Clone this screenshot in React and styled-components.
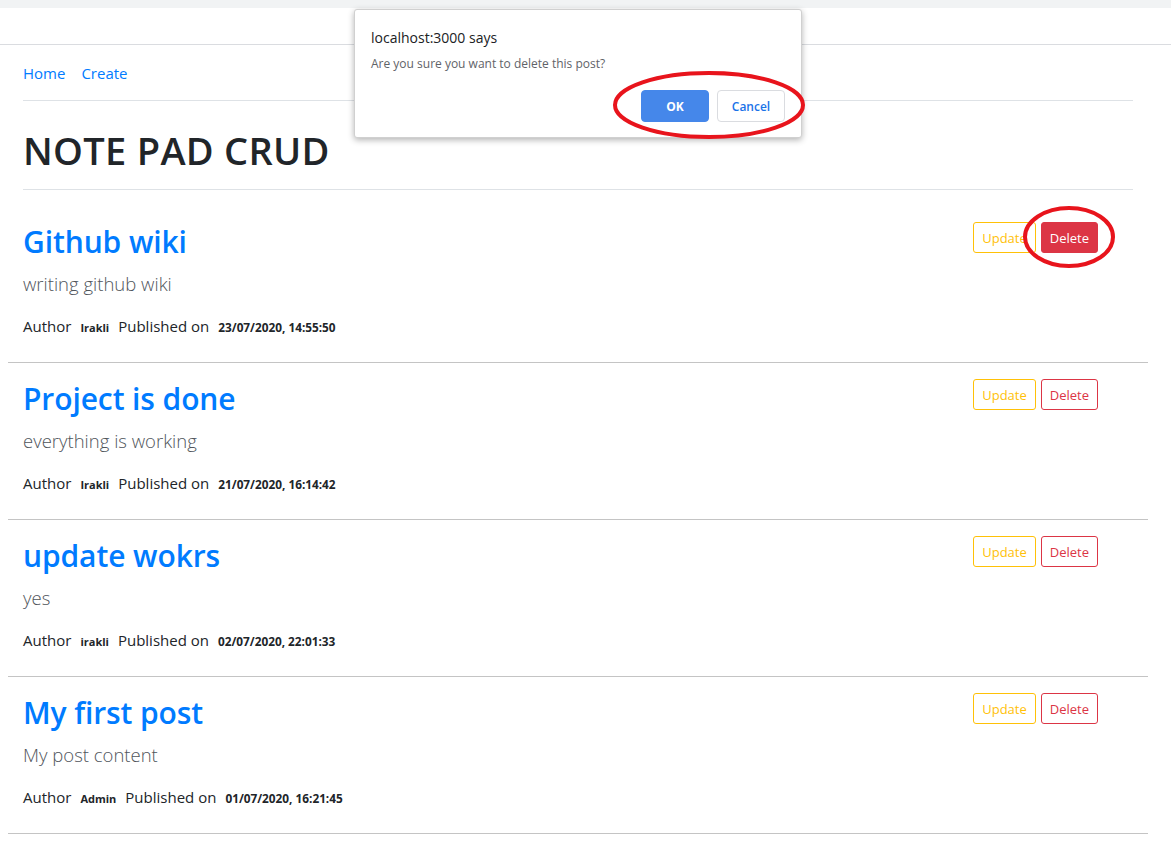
import React from 'react';
import styled, { createGlobalStyle } from 'styled-components';

const GlobalStyles = createGlobalStyle`
  body {
    margin: 0;
    font-family: 'Open Sans', 'Noto Sans', sans-serif;
    color: #212529;
    background: #fff;
  }
`;

const Page = styled.div`
  position: relative;
  min-height: 850px;
`;

const TopStrip = styled.div`
  height: 8px;
  background-color: #f1f3f4;
`;

const Header = styled.div`
  height: 36px;
  border-bottom: 1px solid #dadce0;
`;

const Main = styled.main`
  padding: 0 23px 0 8px;
`;

const Container = styled.div`
  padding: 0 15px;
`;

const Nav = styled.nav`
  display: flex;
  gap: 16px;
  padding: 16px 0 15px;
`;

const NavLink = styled.a`
  color: #007bff;
  font-size: 15px;
  line-height: 24px;
  text-decoration: none;
`;

const Rule = styled.hr`
  margin: 0;
  border: none;
  border-top: 1px solid #dee2e6;
`;

const Title = styled.h1`
  margin: 25px 0 15px;
  font-size: 38px;
  font-weight: 600;
  line-height: 48px;
  letter-spacing: 0.3px;
`;

const PostList = styled.div`
  margin-top: 16px;
`;

const Post = styled.article`
  display: flex;
  justify-content: space-between;
  align-items: flex-start;
  padding: 17px 50px 22px 15px;
  border-bottom: 1px solid #c4c4c4;
`;

const PostBody = styled.div`
  display: flex;
  flex-direction: column;
`;

const PostTitle = styled.a`
  color: #007bff;
  font-size: 30px;
  font-weight: 600;
  line-height: 38px;
  text-decoration: none;
  letter-spacing: -0.1px;
`;

const PostContent = styled.p`
  margin: 8px 0 15px;
  font-size: 18.5px;
  font-weight: 300;
  line-height: 30px;
  color: #50555b;
`;

const Meta = styled.div`
  display: flex;
  align-items: baseline;
  font-size: 15px;
  line-height: 24px;
`;

const MetaStrong = styled.b`
  margin: 0 9px;
  font-size: ${p => (p.$wide ? '11.8px' : '11px')};
  font-weight: 700;
`;

const Actions = styled.div`
  display: flex;
  gap: 5px;
  margin-top: -1px;
`;

const Btn = styled.button`
  height: 31px;
  padding: 0 8px;
  font-family: inherit;
  font-size: 13px;
  background: ${p => (p.$filled ? p.$color : '#fff')};
  color: ${p => (p.$filled ? '#fff' : p.$color)};
  border: 1px solid ${p => p.$color};
  border-radius: 3px;
  cursor: pointer;
`;

const Marked = styled.span`
  position: relative;
  display: inline-flex;
  gap: 8px;
`;

const Ring = styled.svg`
  position: absolute;
  left: 50%;
  top: 50%;
  overflow: visible;
  pointer-events: none;
`;

const Dialog = styled.div`
  position: absolute;
  left: 354px;
  top: 9px;
  width: 448px;
  box-sizing: border-box;
  padding: 17px 16px 15px;
  background: #fff;
  border: 1px solid #d0d0d0;
  border-radius: 3px;
  box-shadow: 0 2px 6px rgba(0, 0, 0, 0.3);
  font-family: 'Open Sans', sans-serif;
`;

const DialogTitle = styled.div`
  font-size: 14px;
  line-height: 22px;
  color: #202124;
`;

const DialogText = styled.div`
  margin-top: 6px;
  font-size: 12px;
  line-height: 18px;
  color: #5f6368;
`;

const DialogActions = styled.div`
  display: flex;
  justify-content: flex-end;
  margin-top: 17px;
`;

const DialogBtn = styled.button`
  width: 68px;
  height: 32px;
  font-family: inherit;
  font-size: 12px;
  font-weight: ${p => (p.$primary ? 700 : 600)};
  color: ${p => (p.$primary ? '#fff' : '#1a73e8')};
  background: ${p => (p.$primary ? '#4587ea' : '#fff')};
  border: 1px solid ${p => (p.$primary ? '#4587ea' : '#dadce0')};
  border-radius: 4px;
`;

const posts = [
  { title: 'Github wiki', content: 'writing github wiki', author: 'Irakli', date: '23/07/2020, 14:55:50', active: true },
  { title: 'Project is done', content: 'everything is working', author: 'Irakli', date: '21/07/2020, 16:14:42' },
  { title: 'update wokrs', content: 'yes', author: 'irakli', date: '02/07/2020, 22:01:33' },
  { title: 'My first post', content: 'My post content', author: 'Admin', date: '01/07/2020, 16:21:45' },
];

const RedEllipse = ({ rx, ry, dx = 0, dy = 0 }) => (
  <Ring
    width={rx * 2}
    height={ry * 2}
    style={{ marginLeft: -rx + dx, marginTop: -ry + dy }}
  >
    <ellipse cx={rx} cy={ry} rx={rx - 2} ry={ry - 2} fill="none" stroke="#e8141c" strokeWidth="4" />
  </Ring>
);

const App = () => {
  return (
    <Page>
      <GlobalStyles />
      <TopStrip />
      <Header />
      <Main>
        <Container>
          <Nav>
            <NavLink href="#">Home</NavLink>
            <NavLink href="#">Create</NavLink>
          </Nav>
          <Rule />
          <Title>NOTE PAD CRUD</Title>
          <Rule />
        </Container>
        <PostList>
          {posts.map(p => (
            <Post key={p.title}>
              <PostBody>
                <PostTitle href="#">{p.title}</PostTitle>
                <PostContent>{p.content}</PostContent>
                <Meta>
                  Author <MetaStrong>{p.author}</MetaStrong> Published on <MetaStrong $wide>{p.date}</MetaStrong>
                </Meta>
              </PostBody>
              <Actions>
                <Btn $color="#ffc107">Update</Btn>
                {p.active ? (
                  <Marked>
                    <Btn $color="#dc3545" $filled>Delete</Btn>
                    <RedEllipse rx={46} ry={31} dy={-1} />
                  </Marked>
                ) : (
                  <Btn $color="#dc3545">Delete</Btn>
                )}
              </Actions>
            </Post>
          ))}
        </PostList>
      </Main>
      <Dialog>
        <DialogTitle>localhost:3000 says</DialogTitle>
        <DialogText>Are you sure you want to delete this post?</DialogText>
        <DialogActions>
          <Marked>
            <DialogBtn $primary>OK</DialogBtn>
            <DialogBtn>Cancel</DialogBtn>
            <RedEllipse rx={96} ry={34} dx={-4} dy={-1} />
          </Marked>
        </DialogActions>
      </Dialog>
    </Page>
  );
};

export default App;
